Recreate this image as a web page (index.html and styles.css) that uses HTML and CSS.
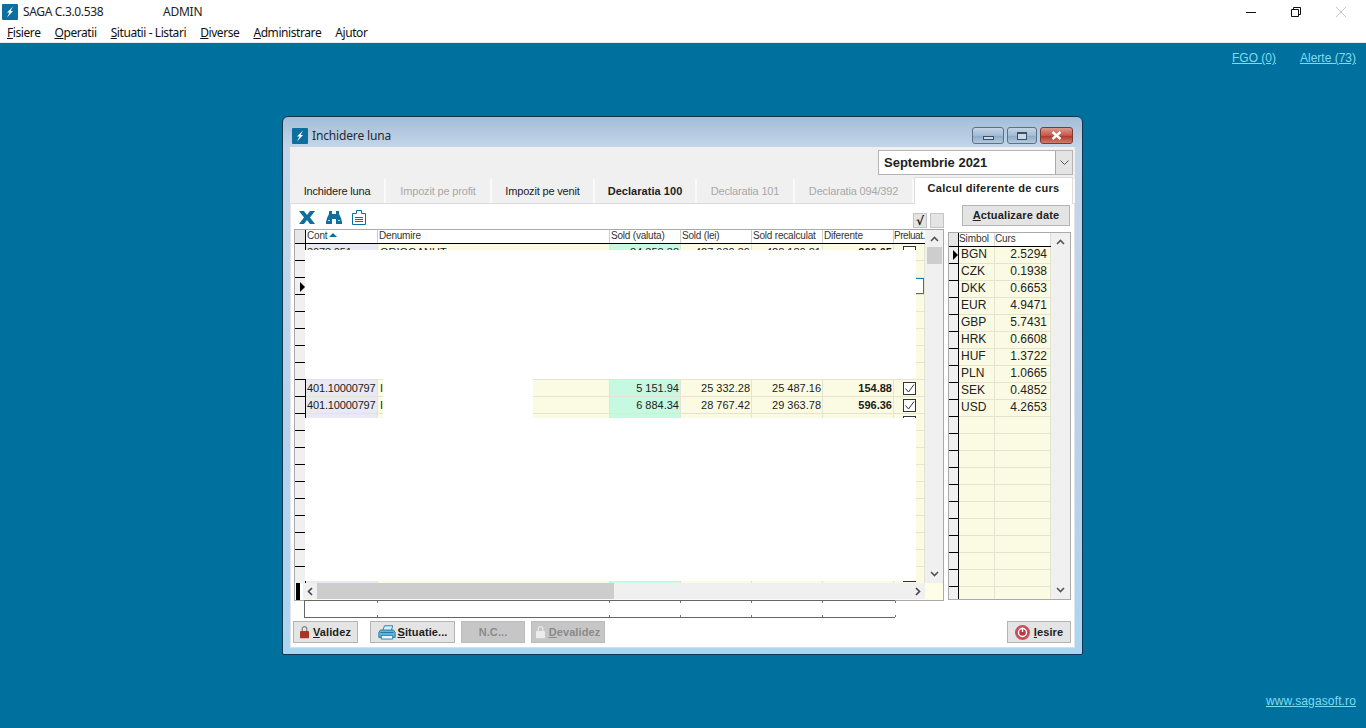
FILE: index.html
```html
<!DOCTYPE html>
<html lang="ro">
<head>
<meta charset="utf-8">
<title>SAGA C.3.0.538</title>
<link rel="stylesheet" href="styles.css">
</head>
<body>
<header class="appbar">
  <div class="titlebar-top">
    <svg class="logo" viewBox="0 0 16 16"><rect width="16" height="16" rx="1" fill="#0d6f9e"/><path d="M11 2.500 5 8.500h2.500L5 13.500l6-6.500H8.500z" fill="#fff"/></svg>
    <span class="app-name">SAGA C.3.0.538</span>
    <span class="app-user">ADMIN</span>
    <div class="sys-buttons">
      <svg class="sys" viewBox="0 0 10 10"><path d="M0 5.500h10" stroke="#111" fill="none"/></svg>
      <svg class="sys" viewBox="0 0 10 10"><path d="M.5 2.500h7v7h-7zM2.500 2.500v-2h7v7h-2" stroke="#111" fill="none"/></svg>
      <svg class="sys" viewBox="0 0 10 10"><path d="M0 0l10 10M10 0 0 10" stroke="#c4c4c4" fill="none"/></svg>
    </div>
  </div>
  <nav class="menu">
    <span><u>F</u>isiere</span><span><u>O</u>peratii</span><span><u>S</u>ituatii - Listari</span><span><u>D</u>iverse</span><span><u>A</u>dministrare</span><span>Ajutor</span>
  </nav>
</header>
<main class="desktop">
  <div class="links-top"><a class="link">FGO (0)</a><a class="link">Alerte (73)</a></div>
  <div class="links-bottom"><a class="link link-www">www.sagasoft.ro</a></div>

  <section class="window">
    <div class="win-title">
      <svg class="win-logo" viewBox="0 0 16 16"><rect width="16" height="16" rx="1" fill="#0d6f9e"/><path d="M11 2.500 5 8.500h2.500L5 13.500l6-6.500H8.500z" fill="#fff"/></svg>
      <span class="win-name">Inchidere luna</span>
      <div class="win-buttons">
        <div class="cap cap-min"><span class="glyph-min"></span></div>
        <div class="cap cap-max"><span class="glyph-max"></span></div>
        <div class="cap cap-close"><svg class="glyph-x" viewBox="0 0 11 9"><path d="M1.500 1 9.500 8M9.500 1 1.500 8" stroke="#fff" stroke-width="2.400" fill="none"/></svg></div>
      </div>
    </div>
    <div class="client">
      <div class="month-strip">
        <div class="combo"><span class="combo-text">Septembrie 2021</span><span class="combo-arrow"><svg class="chev-sm" viewBox="0 0 9 5"><path d="M.5.5 4.500 4.500 8.500.5" stroke="#555" fill="none"/></svg></span></div>
      </div>
      <div class="tabs">
        <div class="tab t1">Inchidere luna</div>
        <div class="tab t2 off">Impozit pe profit</div>
        <div class="tab t3">Impozit pe venit</div>
        <div class="tab t4 strong">Declaratia 100</div>
        <div class="tab t5 off">Declaratia 101</div>
        <div class="tab t6 off">Declaratia 094/392</div>
        <div class="tab t7 active">Calcul diferente de curs</div>
      </div>
      <div class="panel">
        <div class="main">
          <div class="left">
            <div class="toolbar">
              <svg class="tool tool-x" viewBox="0 0 16 13"><path d="M0 0h5l3 4 3-4h5l-5 6.500 5 6.500h-5L8 9l-3 4H0l5-6.500z" fill="#0d6f9e"/></svg>
              <svg class="tool tool-bin" viewBox="0 0 16 13"><path d="M3 0h3v3h4V0h3v3l2 4 1 4v2H10V8H6v5H0v-2l1-4 2-4z" fill="#0d6f9e"/><path d="M2 9.500h2M12 9.500h2" stroke="#bfe3f2"/></svg>
              <svg class="tool tool-doc" viewBox="0 0 14 15"><path d="M4.500 3.500v-3h5v3h4v11H.5v-11zM3 7.500h8M3 9.500h8M3 11.500h8" stroke="#0d6f9e" fill="none"/></svg>
              <div class="mini-buttons"><div class="mini">√</div><div class="mini"></div></div>
            </div>
            <div class="grid">
              <div class="ghead">
                <div class="gut-h"></div>
                <div class="hc">Cont<svg class="sort" viewBox="0 0 8 4"><path d="M4 0l4 4H0z" fill="#0d6f9e"/></svg></div>
                <div class="hc">Denumire</div><div class="hc">Sold (valuta)</div><div class="hc">Sold (lei)</div><div class="hc">Sold recalculat</div><div class="hc">Diferente</div><div class="hc hc-tight">Preluat.</div>
              </div>
              <div class="row"><b class="g"></b><b class="c-a">3073.051</b><b class="c-y">GRIGOANUT</b><b class="c-g n">84 358.38</b><b class="c-y n">427 030.39</b><b class="c-y n">428 180.81</b><b class="c-y n st">260.05</b><b class="c-y ck"><span class="box"></span></b></div>
              <div class="row"><b class="g"></b><b class="c-a"></b><b class="c-y"></b><b class="c-g"></b><b class="c-y"></b><b class="c-y"></b><b class="c-y"></b><b class="c-y"></b></div>
              <div class="row"><b class="g cur"><span class="arrow"></span></b><b class="c-a"></b><b class="c-y"></b><b class="c-g"></b><b class="c-y"></b><b class="c-y"></b><b class="c-y"></b><b class="c-y sel"></b></div>
              <div class="row"><b class="g"></b><b class="c-a"></b><b class="c-y"></b><b class="c-g"></b><b class="c-y"></b><b class="c-y"></b><b class="c-y"></b><b class="c-y"></b></div>
              <div class="row"><b class="g"></b><b class="c-a"></b><b class="c-y"></b><b class="c-g"></b><b class="c-y"></b><b class="c-y"></b><b class="c-y"></b><b class="c-y"></b></div>
              <div class="row"><b class="g"></b><b class="c-a"></b><b class="c-y"></b><b class="c-g"></b><b class="c-y"></b><b class="c-y"></b><b class="c-y"></b><b class="c-y"></b></div>
              <div class="row"><b class="g"></b><b class="c-a"></b><b class="c-y"></b><b class="c-g"></b><b class="c-y"></b><b class="c-y"></b><b class="c-y"></b><b class="c-y"></b></div>
              <div class="row"><b class="g"></b><b class="c-a"></b><b class="c-y"></b><b class="c-g"></b><b class="c-y"></b><b class="c-y"></b><b class="c-y"></b><b class="c-y"></b></div>
              <div class="row"><b class="g"></b><b class="c-a">401.10000797</b><b class="c-y">I</b><b class="c-g n">5 151.94</b><b class="c-y n">25 332.28</b><b class="c-y n">25 487.16</b><b class="c-y n st">154.88</b><b class="c-y ck"><span class="box on"><svg class="tick" viewBox="0 0 11 11"><path d="M1.500 5.500 4.500 9 10 1.500" stroke="#333" fill="none"/></svg></span></b></div>
              <div class="row"><b class="g"></b><b class="c-a">401.10000797</b><b class="c-y">I</b><b class="c-g n">6 884.34</b><b class="c-y n">28 767.42</b><b class="c-y n">29 363.78</b><b class="c-y n st">596.36</b><b class="c-y ck"><span class="box on"><svg class="tick" viewBox="0 0 11 11"><path d="M1.500 5.500 4.500 9 10 1.500" stroke="#333" fill="none"/></svg></span></b></div>
              <div class="row"><b class="g"></b><b class="c-a"></b><b class="c-y"></b><b class="c-g"></b><b class="c-y"></b><b class="c-y"></b><b class="c-y"></b><b class="c-y ck"><span class="box"></span></b></div>
              <div class="row"><b class="g"></b><b class="c-a"></b><b class="c-y"></b><b class="c-g"></b><b class="c-y"></b><b class="c-y"></b><b class="c-y"></b><b class="c-y"></b></div>
              <div class="row"><b class="g"></b><b class="c-a"></b><b class="c-y"></b><b class="c-g"></b><b class="c-y"></b><b class="c-y"></b><b class="c-y"></b><b class="c-y"></b></div>
              <div class="row"><b class="g"></b><b class="c-a"></b><b class="c-y"></b><b class="c-g"></b><b class="c-y"></b><b class="c-y"></b><b class="c-y"></b><b class="c-y"></b></div>
              <div class="row"><b class="g"></b><b class="c-a"></b><b class="c-y"></b><b class="c-g"></b><b class="c-y"></b><b class="c-y"></b><b class="c-y"></b><b class="c-y"></b></div>
              <div class="row"><b class="g"></b><b class="c-a"></b><b class="c-y"></b><b class="c-g"></b><b class="c-y"></b><b class="c-y"></b><b class="c-y"></b><b class="c-y"></b></div>
              <div class="row"><b class="g"></b><b class="c-a"></b><b class="c-y"></b><b class="c-g"></b><b class="c-y"></b><b class="c-y"></b><b class="c-y"></b><b class="c-y"></b></div>
              <div class="row"><b class="g"></b><b class="c-a"></b><b class="c-y"></b><b class="c-g"></b><b class="c-y"></b><b class="c-y"></b><b class="c-y"></b><b class="c-y"></b></div>
              <div class="row"><b class="g"></b><b class="c-a"></b><b class="c-y"></b><b class="c-g"></b><b class="c-y"></b><b class="c-y"></b><b class="c-y"></b><b class="c-y"></b></div>
              <div class="row"><b class="g"></b><b class="c-a"></b><b class="c-y"></b><b class="c-g"></b><b class="c-y"></b><b class="c-y"></b><b class="c-y"></b><b class="c-y ck"><span class="box"></span></b></div>

              <div class="mask mask-top"></div>
              <div class="mask mask-mid"></div>
              <div class="mask mask-bottom"></div>

              <div class="vscroll">
                <svg class="chev" viewBox="0 0 9 6"><path d="M1 5 4.500 1.500 8 5" stroke="#555" stroke-width="1.600" fill="none"/></svg>
                <div class="vthumb"></div>
                <svg class="chev chev-end" viewBox="0 0 9 6"><path d="M1 1 4.500 4.500 8 1" stroke="#555" stroke-width="1.600" fill="none"/></svg>
              </div>
              <div class="grid-corner"></div>
              <div class="hcorner"></div>
              <div class="hscroll">
                <svg class="chev-h" viewBox="0 0 6 9"><path d="M5 1 1.500 4.500 5 8" stroke="#444" stroke-width="1.600" fill="none"/></svg>
                <div class="hthumb"></div>
                <svg class="chev-h chev-end-h" viewBox="0 0 6 9"><path d="M1 1 4.500 4.500 1 8" stroke="#444" stroke-width="1.600" fill="none"/></svg>
              </div>
            </div>
            <div class="totals"><i class="tc"></i><i class="tc"></i><i class="tc"></i><i class="tc"></i><i class="tc"></i><i class="tc"></i></div>
          </div>
          <div class="right">
            <div class="btn btn-update"><span><u>A</u>ctualizare date</span></div>
            <div class="rates">
              <div class="rhead"><div class="gut-h r"></div><div class="rh">Simbol</div><div class="rh">Curs</div></div>
              <div class="rrow"><b class="g cur"><span class="arrow"></span></b><b class="rc">BGN</b><b class="rc n">2.5294</b></div>
              <div class="rrow"><b class="g"></b><b class="rc">CZK</b><b class="rc n">0.1938</b></div>
              <div class="rrow"><b class="g"></b><b class="rc">DKK</b><b class="rc n">0.6653</b></div>
              <div class="rrow"><b class="g"></b><b class="rc">EUR</b><b class="rc n">4.9471</b></div>
              <div class="rrow"><b class="g"></b><b class="rc">GBP</b><b class="rc n">5.7431</b></div>
              <div class="rrow"><b class="g"></b><b class="rc">HRK</b><b class="rc n">0.6608</b></div>
              <div class="rrow"><b class="g"></b><b class="rc">HUF</b><b class="rc n">1.3722</b></div>
              <div class="rrow"><b class="g"></b><b class="rc">PLN</b><b class="rc n">1.0665</b></div>
              <div class="rrow"><b class="g"></b><b class="rc">SEK</b><b class="rc n">0.4852</b></div>
              <div class="rrow"><b class="g"></b><b class="rc">USD</b><b class="rc n">4.2653</b></div>
              <div class="rrow"><b class="g"></b><b class="rc"></b><b class="rc"></b></div>
              <div class="rrow"><b class="g"></b><b class="rc"></b><b class="rc"></b></div>
              <div class="rrow"><b class="g"></b><b class="rc"></b><b class="rc"></b></div>
              <div class="rrow"><b class="g"></b><b class="rc"></b><b class="rc"></b></div>
              <div class="rrow"><b class="g"></b><b class="rc"></b><b class="rc"></b></div>
              <div class="rrow"><b class="g"></b><b class="rc"></b><b class="rc"></b></div>
              <div class="rrow"><b class="g"></b><b class="rc"></b><b class="rc"></b></div>
              <div class="rrow"><b class="g"></b><b class="rc"></b><b class="rc"></b></div>
              <div class="rrow"><b class="g"></b><b class="rc"></b><b class="rc"></b></div>
              <div class="rrow"><b class="g"></b><b class="rc"></b><b class="rc"></b></div>
              <div class="rrow"><b class="g"></b><b class="rc"></b><b class="rc"></b></div>
              <div class="rscroll">
                <svg class="chev" viewBox="0 0 9 6"><path d="M1 5 4.500 1.500 8 5" stroke="#555" stroke-width="1.600" fill="none"/></svg>
                <svg class="chev chev-end" viewBox="0 0 9 6"><path d="M1 1 4.500 4.500 8 1" stroke="#555" stroke-width="1.600" fill="none"/></svg>
              </div>
            </div>
          </div>
        </div>
        <div class="actions">
          <div class="btn btn-validez">
            <svg class="lock" viewBox="0 0 10 14"><path d="M2.500 6V3.500a2.500 2.500 0 0 1 5 0V6" stroke="#8a8a8a" stroke-width="1.500" fill="none"/><rect y="6" width="10" height="8" rx="1" fill="#a8352a"/></svg>
            <span><u>V</u>alidez</span>
          </div>
          <div class="btn btn-situatie">
            <svg class="printer" viewBox="0 0 22 18"><path d="M6 6 8 .8h10L16.500 6" stroke="#0d6f9e" fill="#d9eef7"/><path d="M3 6h16l2 3v6H1V9z" fill="#6db4d4" stroke="#0d6f9e"/><path d="M4 12.500h14v4.500H4z" fill="#eef7fb" stroke="#0d6f9e"/><path d="M3 9h16" stroke="#0d6f9e"/></svg>
            <span><u>S</u>ituatie...</span>
          </div>
          <div class="btn btn-off btn-nc"><span>N.C...</span></div>
          <div class="btn btn-off btn-dev">
            <svg class="lock" viewBox="0 0 10 14"><path d="M2.500 6V3.500a2.500 2.500 0 0 1 5 0V6" stroke="#e8e8e8" stroke-width="1.500" fill="none"/><rect y="6" width="10" height="8" rx="1" fill="#ececec"/></svg>
            <span><u>D</u>evalidez</span>
          </div>
          <div class="btn btn-exit">
            <svg class="power" viewBox="0 0 15 15"><circle cx="7.500" cy="7.500" r="7.500" fill="#c9505a"/><circle cx="7.500" cy="7.500" r="4" stroke="#fff" stroke-width="1.400" fill="#b83a45"/><path d="M7.500 2.500v4.500" stroke="#fff" stroke-width="1.400"/></svg>
            <span><u>I</u>esire</span>
          </div>
        </div>
      </div>
    </div>
  </section>
</main>
</body>
</html>
```

FILE: styles.css
```css
* { box-sizing: border-box; }
html, body { height: 100%; }
body {
  margin: 0;
  display: flex;
  flex-direction: column;
  height: 728px;
  overflow: hidden;
  font-family: "Liberation Sans", Arial, sans-serif;
  background: #00709f;
}
.appbar { height: 43px; background: #fff; border-bottom: 1px solid #dcecf5; flex: none; }
.titlebar-top { height: 21px; display: flex; align-items: center; padding: 2px 0 0 2px; font: 12px "Noto Sans", sans-serif; color: #222; }
.logo { width: 16px; height: 16px; }
.app-name { margin-left: 5px; width: 140px; letter-spacing: -0.35px; }
.app-user { letter-spacing: -0.25px; }
.sys-buttons { margin-left: auto; display: flex; gap: 35px; padding-right: 20px; }
.sys { width: 10px; height: 10px; display: block; }
.menu { display: flex; gap: 14px; padding: 3px 0 0 7px; font: 12px "Noto Sans", sans-serif; color: #111; letter-spacing: -0.42px; }

.desktop { flex: 1; position: relative; display: flex; flex-direction: column; justify-content: space-between; padding: 8px 10px 20px; }
.links-top { display: flex; justify-content: flex-end; gap: 24px; }
.links-bottom { display: flex; justify-content: flex-end; }
.link { color: #7fdcf0; font-size: 12px; text-decoration: underline; }
.link-www { letter-spacing: 0.13px; }

.window {
  position: absolute; left: 282px; top: 73px; width: 801px; height: 539px;
  border: 1px solid #12384f; border-radius: 6px 6px 2px 2px;
  padding: 0 7px 6px;
  background: linear-gradient(#a4bdd7 0, #c3d6e9 30px, #b8d2ec 60%, #aad6f3 100%);
  display: flex; flex-direction: column;
}
.win-title { height: 30px; flex: none; display: flex; align-items: center; padding: 7px 2px 0 2px; }
.win-logo { width: 16px; height: 16px; }
.win-name { margin-left: 4px; font: 12px "Noto Sans", sans-serif; letter-spacing: -0.15px; color: #1e2a35; }
.win-buttons { margin-left: auto; display: flex; gap: 3px; align-self: flex-start; margin-top: 3px; }
.cap { height: 17px; border: 1px solid #5c7188; border-radius: 3px; display: flex; align-items: center; justify-content: center; background: linear-gradient(#c3d4e5, #a3bcd5 50%, #8eabc8 55%, #b3c9dd); }
.cap-min { width: 32px; }
.cap-max { width: 30px; }
.cap-close { width: 33px; border-color: #7a3a34; background: linear-gradient(#dc9a90, #c4574a 50%, #b03a2e 55%, #d17c6c); }
.glyph-min { width: 11px; height: 4px; border: 1px solid #3c4e60; background: #c9d8e6; margin-top: 5px; }
.glyph-max { width: 10px; height: 8px; border: 1px solid #3c4e60; border-top-width: 2px; background: #c9d8e6; }
.glyph-x { width: 11px; height: 9px; }

.client { flex: 1; display: flex; flex-direction: column; background: #f0f0f0; min-height: 0; }
.month-strip { height: 32px; flex: none; display: flex; justify-content: flex-end; padding: 3px 2px 0 0; }
.combo { width: 195px; height: 25px; background: #fff; border: 1px solid #b4b4b4; display: flex; align-items: center; }
.combo-text { flex: 1; padding-left: 5px; font-size: 13px; font-weight: 700; color: #222; }
.combo-arrow { width: 17px; height: 23px; background: #e4e4e4; border-left: 1px solid #aaa; display: flex; align-items: center; justify-content: center; }
.chev-sm { width: 9px; height: 5px; }

.tabs { height: 25px; flex: none; display: flex; gap: 2px; align-items: flex-end; background: #fafafa; border-bottom: 1px solid #dcdcdc; position: relative; }
.tab { height: 24px; background: #f0f0f0; font-size: 11px; color: #222; display: flex; align-items: center; justify-content: center; letter-spacing: -0.17px; padding-bottom: 1px; }
.off { color: #a8a8a8; }
.strong { font-weight: 700; letter-spacing: 0.05px; }
.t1 { width: 94px; } .t2 { width: 104px; } .t3 { width: 101px; } .t4 { width: 100px; } .t5 { width: 96px; } .t6 { width: 117px; }
.t7 { width: 159px; }
.active { height: 27px; margin-bottom: -1px; background: #fff; font-weight: 700; letter-spacing: 0.3px; padding: 0 0 6px; border: 1px solid #dcdcdc; border-bottom: 0; }

.panel { flex: 1; background: #fff; display: flex; flex-direction: column; min-height: 0; border-left: 1px solid #e4e4e4; border-right: 1px solid #e4e4e4; border-bottom: 1px solid #dcdcdc; }
.main { height: 414px; flex: none; display: flex; gap: 4px; padding-left: 3px; }
.left { width: 650px; flex: none; }
.toolbar { height: 25px; display: flex; align-items: flex-end; padding-left: 5px; padding-bottom: 1px; }
.tool { display: block; }
.tool-x { width: 16px; height: 13px; margin-bottom: 4px; }
.tool-bin { width: 16px; height: 13px; margin: 0 0 4px 11px; }
.tool-doc { width: 14px; height: 15px; margin: 0 0 3px 10px; }
.mini-buttons { margin-left: auto; display: flex; gap: 3px; }
.mini { width: 14px; height: 15px; background: #e4e4e4; border: 1px solid #c4c4c4; font: 700 12px "DejaVu Sans", sans-serif; color: #111; text-align: center; line-height: 14px; }

.grid { position: relative; height: 372px; border: 1px solid #aaa; background: #fdfde8; overflow: hidden; }
.ghead, .row { display: grid; grid-template-columns: 11px 72px 232px 71px 71px 71px 71px 31px; width: 630px; }
.ghead { height: 14px; background: #fff; border-bottom: 1px solid #000; }
.gut-h { background: #e6e6e6; border-right: 1px solid #000; }
.hc { font-size: 10px; line-height: 12px; color: #333; padding-left: 1px; white-space: nowrap; overflow: hidden; border-right: 1px solid #cfcfcf; background: #fff; letter-spacing: -0.2px; }
.hc-tight { letter-spacing: -0.45px; padding-left: 0; border-right: 0; }
.sort { width: 8px; height: 4px; margin: 0 0 2px 2px; }
.row { height: 17px; font-size: 11px; }
.row b { font-weight: 400; display: block; border-right: 1px solid #e4e4d0; border-bottom: 1px solid #e4e4d0; padding: 0 1px 0 2px; line-height: 16px; color: #1c1c1c; white-space: nowrap; overflow: hidden; }
.row b.g, .rrow b.g { background: #f0f0f0; border-right: 1px solid #000; border-bottom: 1px solid #000; padding: 0; display: flex; align-items: center; justify-content: flex-end; }
.row b.c-a { background: #e9e9f3; padding-left: 1px; letter-spacing: -0.15px; }
.row b.c-y { background: #fbfbe3; }
.row b.c-g { background: #c6f8e2; }
.row b.n, .rrow b.n { text-align: right; }
.row b.st { font-weight: 700; }
.row b.ck { padding: 2px 0 0 9px; position: relative; }
.row b.sel { box-shadow: inset 0 0 0 1px #1f7fa8; background: #fff; }
.row .arrow { margin-top: 1px; }
.arrow { width: 0; height: 0; border-left: 5px solid #000; border-top: 5px solid transparent; border-bottom: 5px solid transparent; }
.box { display: block; width: 13px; height: 13px; border: 1px solid #333; background: #fff; }
.tick { width: 11px; height: 11px; display: block; }

.mask { position: absolute; background: #fff; }
.mask-top { left: 10px; top: 20px; width: 611px; height: 129px; }
.mask-mid { left: 88px; top: 149px; width: 150px; height: 39px; }
.mask-bottom { left: 10px; top: 188px; width: 611px; height: 163px; }

.vscroll { position: absolute; right: 0; top: 0; width: 18px; height: 353px; background: #f0f0f0; display: flex; flex-direction: column; align-items: center; padding: 6px 0; }
.vthumb { width: 15px; height: 17px; background: #cdcdcd; margin-top: 5px; }
.chev { width: 9px; height: 6px; flex: none; }
.chev-end { margin-top: auto; }
.grid-corner { position: absolute; right: 0; bottom: 0; width: 18px; height: 17px; background: #fdfde8; }
.hcorner { position: absolute; left: 0; bottom: 0; width: 8px; height: 17px; background: #fff; border-left: 1px solid #fff; }
.hcorner::before { content: ""; display: block; width: 4px; height: 17px; background: #000; }
.hscroll { position: absolute; left: 8px; bottom: 1px; width: 622px; height: 16px; background: #f0f0f0; display: flex; align-items: center; padding: 0 4px; }
.hthumb { width: 297px; height: 16px; background: #cdcdcd; margin-left: 4px; }
.chev-h { width: 6px; height: 9px; flex: none; }
.chev-end-h { margin-left: auto; }

.totals { margin: -1px 0 0 10px; width: 591px; height: 18px; display: grid; grid-template-columns: 73px 232px 71px 71px 71px 73px; border: 1px solid #666; border-right: 0; position: relative; background: #fff; }
.tc { background: linear-gradient(#777, #777) right top / 1px 2px no-repeat, linear-gradient(#777, #777) right bottom / 1px 2px no-repeat; }

.right { width: 123px; flex: none; }
.btn { display: flex; align-items: center; justify-content: center; gap: 4px; background: #e4e4e4; border: 1px solid #b4b4b4; font-size: 11px; font-weight: 700; color: #222; letter-spacing: 0.1px; }
.btn-update { width: 108px; height: 21px; margin: 1px 0 6px 14px; padding-bottom: 1px; letter-spacing: 0.14px; }
.rates { position: relative; height: 368px; border: 1px solid #aaa; background: #fdfde8; overflow: hidden; }
.rhead, .rrow { display: grid; grid-template-columns: 10px 36px 56px; width: 102px; }
.rhead { height: 14px; background: #fff; border-bottom: 1px solid #000; }
.rh { font-size: 10px; line-height: 11px; color: #333; border-right: 1px solid #ddd; letter-spacing: -0.1px; }
.rrow { height: 17px; }
.rc { font-weight: 400; font-size: 12px; line-height: 15px; background: #fbfbe3; border-right: 1px solid #e4e4d0; border-bottom: 1px solid #e4e4d0; padding: 0 3px 0 2px; color: #222; }
.rscroll { position: absolute; right: 0; top: 0; bottom: 0; width: 19px; background: #f0f0f0; display: flex; flex-direction: column; align-items: center; padding: 6px 0; }

.actions { height: 22px; margin-top: 3px; display: flex; padding: 0 3px 0 2px; }
.btn-validez { width: 65px; }
.btn-situatie { width: 85px; margin-left: 12px; gap: 2px; }
.btn-nc { width: 64px; margin-left: 6px; }
.btn-dev { width: 74px; margin-left: 6px; }
.btn-off { background: #c6c6c6; border-color: #bcbcbc; color: #8a8a8a; }
.btn-exit { width: 64px; margin-left: auto; }
.lock { width: 9px; height: 14px; }
.printer { width: 18px; height: 15px; }
.power { width: 15px; height: 15px; }
```
